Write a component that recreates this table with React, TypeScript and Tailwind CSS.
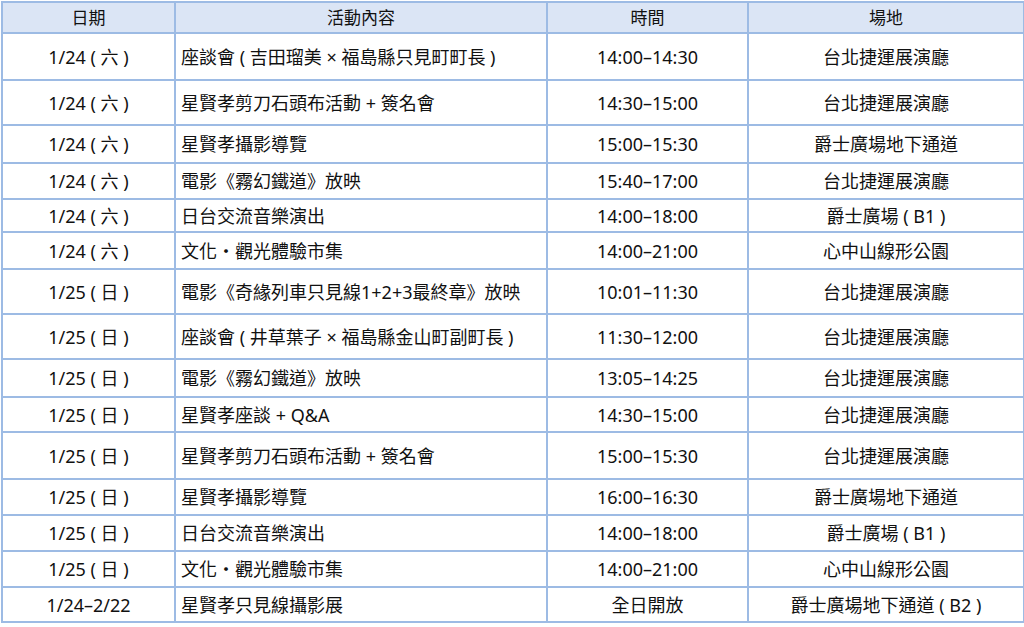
const rows: [string, string, string, string, number][] = [
  ["1/24 ( 六 )", "座談會 ( 吉田瑠美 × 福島縣只見町町長 )", "14:00–14:30", "台北捷運展演廳", 47],
  ["1/24 ( 六 )", "星賢孝剪刀石頭布活動 + 簽名會", "14:30–15:00", "台北捷運展演廳", 45],
  ["1/24 ( 六 )", "星賢孝攝影導覽", "15:00–15:30", "爵士廣場地下通道", 38],
  ["1/24 ( 六 )", "電影《霧幻鐵道》放映", "15:40–17:00", "台北捷運展演廳", 36],
  ["1/24 ( 六 )", "日台交流音樂演出", "14:00–18:00", "爵士廣場 ( B1 )", 33],
  ["1/24 ( 六 )", "文化・觀光體驗市集", "14:00–21:00", "心中山線形公園", 37],
  ["1/25 ( 日 )", "電影《奇緣列車只見線1+2+3最終章》放映", "10:01–11:30", "台北捷運展演廳", 45],
  ["1/25 ( 日 )", "座談會 ( 井草葉子 × 福島縣金山町副町長 )", "11:30–12:00", "台北捷運展演廳", 45],
  ["1/25 ( 日 )", "電影《霧幻鐵道》放映", "13:05–14:25", "台北捷運展演廳", 38],
  ["1/25 ( 日 )", "星賢孝座談 + Q&A", "14:30–15:00", "台北捷運展演廳", 35],
  ["1/25 ( 日 )", "星賢孝剪刀石頭布活動 + 簽名會", "15:00–15:30", "台北捷運展演廳", 47],
  ["1/25 ( 日 )", "星賢孝攝影導覽", "16:00–16:30", "爵士廣場地下通道", 36],
  ["1/25 ( 日 )", "日台交流音樂演出", "14:00–18:00", "爵士廣場 ( B1 )", 36],
  ["1/25 ( 日 )", "文化・觀光體驗市集", "14:00–21:00", "心中山線形公園", 36],
  ["1/24–2/22", "星賢孝只見線攝影展", "全日開放", "爵士廣場地下通道 ( B2 )", 35],
];

export default function App() {
  return (
    <div className="h-[627px] w-[1024px] bg-white pl-px pt-px">
      <table
        className="w-[1022px] table-fixed border-collapse text-[18px] leading-none text-[#111]"
        style={{ fontFamily: '"Noto Sans", "Noto Sans CJK TC", sans-serif' }}
      >
        <colgroup>
          <col className="w-[173px]" />
          <col className="w-[372px]" />
          <col className="w-[201px]" />
          <col className="w-[276px]" />
        </colgroup>
        <thead>
          <tr className="h-[31px] bg-[#dbe5f5] text-[17px]">
            <th className="border-2 border-[#9dbbe4] font-normal">日期</th>
            <th className="border-2 border-[#9dbbe4] font-normal">活動內容</th>
            <th className="border-2 border-[#9dbbe4] font-normal">時間</th>
            <th className="border-2 border-[#9dbbe4] font-normal">場地</th>
          </tr>
        </thead>
        <tbody>
          {rows.map(([date, event, time, place, h], i) => (
            <tr key={i} style={{ height: h }}>
              <td className="border-2 border-[#9dbbe4] text-center">{date}</td>
              <td className="border-2 border-[#9dbbe4] pl-[5px] text-left">{event}</td>
              <td className="border-2 border-[#9dbbe4] text-center">{time}</td>
              <td className="border-2 border-[#9dbbe4] text-center">{place}</td>
            </tr>
          ))}
        </tbody>
      </table>
    </div>
  );
}
